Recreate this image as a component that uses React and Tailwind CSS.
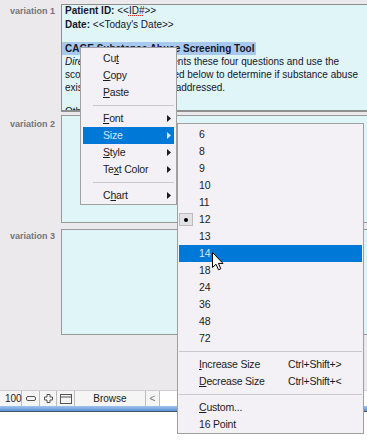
import React from "react";

function Tri() {
  return (
    <svg width="4" height="7" viewBox="0 0 4 7" className="shrink-0">
      <path d="M0 0 L4 3.5 L0 7 Z" fill="currentColor" />
    </svg>
  );
}

function MenuItem({ children, arrow, active }) {
  return (
    <div
      className={`mx-[2px] h-[17px] flex items-center pr-[3px] ${
        active ? "bg-[#0078d7] text-[#d6e8f9]" : "text-[#1b1b1b]"
      }`}
    >
      <span className="w-[20px] shrink-0" />
      <span className="flex-1 whitespace-nowrap">{children}</span>
      {arrow && <Tri />}
    </div>
  );
}

function SizeItem({ children, shortcut, active, checked }) {
  return (
    <div
      className={`mx-px h-[17px] flex items-center ${
        active ? "bg-[#0078d7] text-[#d6e8f9]" : "text-[#1b1b1b]"
      }`}
    >
      <span className="w-[20px] shrink-0 flex items-center">
        {checked && (
          <span className="w-[14px] h-[13px] flex items-center justify-center bg-[#e2e2e4] border border-[#bcbcbc]">
            <span className="w-[4px] h-[4px] rounded-full bg-black" />
          </span>
        )}
      </span>
      <span className="w-[89px] shrink-0 whitespace-nowrap">{children}</span>
      {shortcut && <span className="whitespace-nowrap">{shortcut}</span>}
    </div>
  );
}

function Sep({ inset }) {
  return (
    <div className={`h-[9px] flex items-center ${inset ? "ml-[12px] mr-[2px]" : "mx-px"}`}>
      <div className="w-full border-t border-[#c9c9cc]" />
    </div>
  );
}

const sizes = ["6", "8", "9", "10", "11", "12", "13", "14", "18", "24", "36", "48", "72"];

export default function App() {
  return (
    <div className="relative w-[367px] h-[440px] overflow-hidden bg-[#ebe9ec] font-['Liberation_Sans',Arial,sans-serif]">
      <div className="flex flex-col h-full">
        {/* layout area */}
        <div className="h-[390px] pt-[4px]">
          <div className="flex h-[108px]">
            <div className="w-[61px] shrink-0 text-right pr-[6px] pt-[2px] text-[9px] leading-[11px] font-bold text-[#747474]">
              variation 1
            </div>
            <div className="w-[330px] shrink-0 border border-b-2 border-[#8e8e8e] bg-[#dff5f8] overflow-hidden px-[3px] text-[10px] text-[#16162a]">
              <div className="-mt-px leading-[14px] whitespace-nowrap">
                <b>Patient ID:</b> &lt;&lt;
                <span className="underline decoration-dotted decoration-[#e02020]">ID#</span>&gt;&gt;
              </div>
              <div className="leading-[14px] whitespace-nowrap">
                <b>Date:</b> &lt;&lt;Today's Date&gt;&gt;
              </div>
              <div className="mt-[10px] leading-[13px] whitespace-nowrap">
                <span className="inline-block -ml-[3px] pl-[3px] pr-[2px] bg-[#a7c9ef] font-bold">
                  CAGE Substance Abuse Screening Tool
                </span>
              </div>
              <div className="leading-[13px] whitespace-nowrap">
                <i>Directions:</i> Ask your patients these four questions and use the
              </div>
              <div className="leading-[13px] whitespace-nowrap">
                scoring methods described below to determine if substance abuse
              </div>
              <div className="leading-[13px] whitespace-nowrap">
                exists and it needs to be addressed.
              </div>
              <div className="mt-[11px] leading-[13px] whitespace-nowrap">Other Drug Use</div>
            </div>
          </div>

          <div className="flex h-[108px] mt-[3px]">
            <div className="w-[61px] shrink-0 text-right pr-[6px] pt-[4px] text-[9px] leading-[11px] font-bold text-[#747474]">
              variation 2
            </div>
            <div className="w-[330px] shrink-0 border border-[#999999] bg-[#dff5f8]" />
          </div>

          <div className="flex h-[106px] mt-[6px]">
            <div className="w-[61px] shrink-0 text-right pr-[6px] pt-[2px] text-[9px] leading-[11px] font-bold text-[#747474]">
              variation 3
            </div>
            <div className="w-[330px] shrink-0 border border-[#999999] bg-[#dff5f8]" />
          </div>
        </div>

        {/* bottom toolbar */}
        <div className="h-[16px] flex border-t border-[#cfcfcf] bg-[#f5f5f5] text-[10px] text-[#222222]">
          <div className="w-[22px] flex items-center pl-[5px] border-r border-[#bdbdbd]">100</div>
          <div className="w-[18px] flex items-center justify-center border-r border-[#bdbdbd]">
            <svg width="10" height="5" viewBox="0 0 10 5">
              <rect x="0.5" y="0.5" width="9" height="4" rx="1.5" fill="#f5f5f5" stroke="#555" />
            </svg>
          </div>
          <div className="w-[17px] flex items-center justify-center border-r border-[#bdbdbd]">
            <svg width="9" height="9" viewBox="0 0 9 9">
              <path d="M3 .5h3v2.5h2.5v3H6v2.5H3V6H.5V3H3z" fill="#f5f5f5" stroke="#555" />
            </svg>
          </div>
          <div className="w-[18px] flex items-center justify-center border-r border-[#bdbdbd]">
            <svg width="12" height="10" viewBox="0 0 12 10">
              <rect x="0.5" y="0.5" width="11" height="9" fill="none" stroke="#555" />
              <line x1="0.5" y1="3" x2="11.5" y2="3" stroke="#555" />
            </svg>
          </div>
          <div className="w-[71px] flex items-center justify-center border-r border-[#bdbdbd]">Browse</div>
          <div className="w-[14px] flex items-center justify-center border-r border-[#bdbdbd] text-[#777777]">&lt;</div>
          <div className="flex-1 bg-white" />
        </div>
        <div className="h-[6px] bg-linear-to-b from-[#a0c3ee] to-[#5c90d5] border-b border-[#4a5564]" />
        <div className="flex-1 bg-white" />
      </div>

      {/* context menu */}
      <div className="absolute left-[80px] top-[47px] w-[97px] border border-[#a0a0a0] bg-[#f3f1f6] pt-[2px] text-[10.5px] tracking-[-0.2px] leading-[17px]">
        <MenuItem>
          Cu<u>t</u>
        </MenuItem>
        <MenuItem>
          <u>C</u>opy
        </MenuItem>
        <MenuItem>
          <u>P</u>aste
        </MenuItem>
        <Sep inset />
        <MenuItem arrow>
          <u>F</u>ont
        </MenuItem>
        <MenuItem arrow active>
          Size
        </MenuItem>
        <MenuItem arrow>
          <u>S</u>tyle
        </MenuItem>
        <MenuItem arrow>
          Te<u>x</u>t Color
        </MenuItem>
        <Sep inset />
        <MenuItem arrow>
          C<u>h</u>art
        </MenuItem>
      </div>

      {/* size submenu */}
      <div className="absolute left-[177px] top-[123px] w-[187px] border border-[#a0a0a0] bg-[#f3f1f6] pt-[2px] text-[10.5px] tracking-[-0.2px] leading-[17px]">
        {sizes.map((s) => (
          <SizeItem key={s} active={s === "14"} checked={s === "12"}>
            {s}
          </SizeItem>
        ))}
        <Sep />
        <SizeItem shortcut="Ctrl+Shift+>">
          <u>I</u>ncrease Size
        </SizeItem>
        <SizeItem shortcut="Ctrl+Shift+<">
          <u>D</u>ecrease Size
        </SizeItem>
        <Sep />
        <SizeItem>
          <u>C</u>ustom...
        </SizeItem>
        <SizeItem>16 Point</SizeItem>
      </div>

      {/* mouse pointer */}
      <svg className="absolute left-[212px] top-[252px]" width="12" height="19" viewBox="0 0 12 19">
        <path
          d="M0.5 0.5 L0.5 15.5 L4 12.2 L6.5 17.8 L8.8 16.8 L6.4 11.4 L11 11.4 Z"
          fill="white"
          stroke="black"
          strokeWidth="1"
          strokeLinejoin="round"
        />
      </svg>
    </div>
  );
}
